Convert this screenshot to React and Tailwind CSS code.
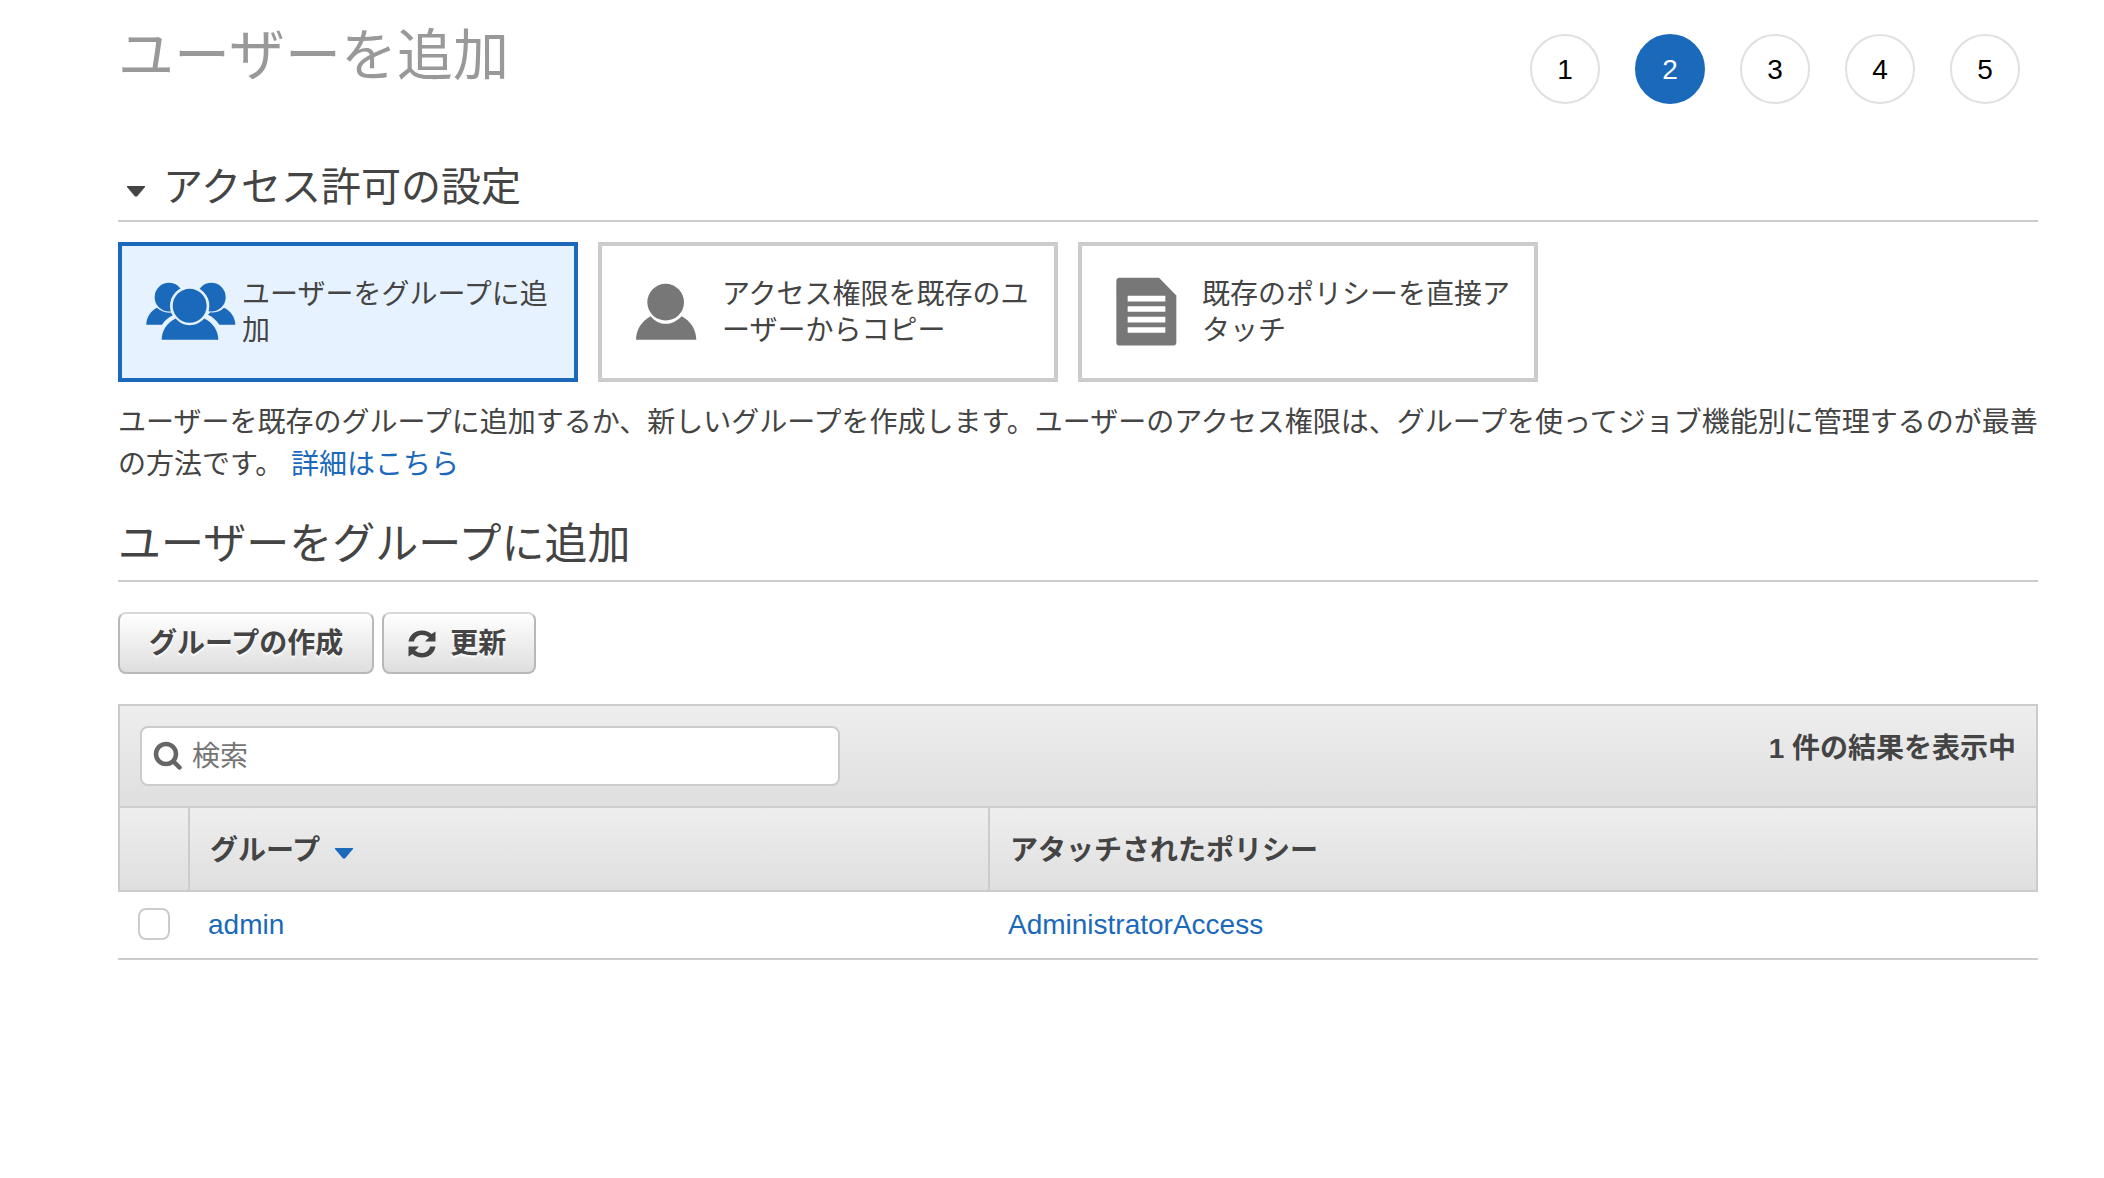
const steps = [1, 2, 3, 4, 5];
const currentStep = 2;

const groups = [{ name: 'admin', policy: 'AdministratorAccess' }];

function UsersIcon() {
  return (
    <svg viewBox="104 124 276 212" className="h-[71px] w-[92px] shrink-0 fill-[#1a69bb]" aria-hidden="true">
      <circle cx="176" cy="187" r="43" />
      <circle cx="303" cy="187" r="43" />
      <path d="M108 270c0-22 13-42 32-51 11 11 27 16 43 14l5 8c-14 6-25 16-33 29z" />
      <path d="M375 270c0-22-14-42-34-51-11 11-27 16-41 13l-7 8c14 6 26 17 34 30z" />
      <circle cx="238" cy="213" r="59" className="fill-[#e6f2ff]" />
      <circle cx="238" cy="213" r="51" />
      <path d="M154 315c0-27 16-52 42-64 11 13 26 20 42 20s32-7 44-20c26 12 42 37 42 64z" />
    </svg>
  );
}

function UserIcon() {
  return (
    <svg viewBox="104 124 276 212" className="h-[71px] w-[92px] shrink-0 fill-[#777]" aria-hidden="true">
      <circle cx="226" cy="202" r="55" />
      <path d="M137 315c0-30 17-57 44-71 12 15 28 23 45 23s34-8 48-23c27 14 44 41 44 71z" />
    </svg>
  );
}

function DocumentIcon() {
  return (
    <svg viewBox="104 124 276 212" className="h-[71px] w-[92px] shrink-0 fill-[#777]" aria-hidden="true">
      <path d="M148 129h118l52 53v140q0 10-10 10H148q-10 0-10-10V139q0-10 10-10z" />
      <path d="M172 183h113v17H172zM172 214h113v17H172zM172 246h113v17H172zM172 277h113v17H172z" className="fill-white" />
    </svg>
  );
}

function CaretIcon({ className }) {
  return (
    <svg viewBox="0 0 18 11" className={className} aria-hidden="true">
      <path d="M0 0h18v1l-8 9.500h-2L0 1z" />
    </svg>
  );
}

function RefreshIcon() {
  return (
    <svg viewBox="0 0 28 28" className="h-7 w-7 fill-[#444]" aria-hidden="true">
      <path d="M0.500 11.500C1.500 5 7 0.500 14 0.500c4 0 7 1.300 9.500 3.500L27.500 1.500v10H17l4-4c-2-1.700-4.500-2.500-7-2.500-4 0-7 2.500-8 6.500z" />
      <path d="M27.500 16.500c-1 6.500-6.500 11-13.500 11-4 0-7-1.300-9.500-3.500l-4 2.500v-10H11l-4 4c2 1.700 4.500 2.500 7 2.500 4 0 7-2.500 8-6.500z" />
    </svg>
  );
}

function SearchIcon() {
  return (
    <svg viewBox="0 0 30 30" className="h-[30px] w-[30px] shrink-0 fill-none stroke-[#666]" aria-hidden="true">
      <circle cx="13" cy="13" r="10" strokeWidth="4.500" />
      <path d="M20.500 20.500l6 6" strokeWidth="4.500" strokeLinecap="round" />
    </svg>
  );
}

const options = [
  { label: 'ユーザーをグループに追加', icon: UsersIcon, selected: true },
  { label: 'アクセス権限を既存のユーザーからコピー', icon: UserIcon },
  { label: '既存のポリシーを直接アタッチ', icon: DocumentIcon },
];

const buttonClass =
  'flex items-center rounded-lg border-2 border-[#b8b8b8] border-t-[#d9d9d9] bg-linear-to-b from-white to-[#dedede] pt-[9px] pb-[7px] font-bold leading-[42px] [text-shadow:0_2px_2px_white]';

export default function App() {
  return (
    <main
      lang="ja"
      className="min-h-screen bg-white pr-[66px] pl-[118px] font-['Liberation_Sans','Noto_Sans_CJK_JP',sans-serif] text-[28px] text-[#444]"
    >
      <header className="flex items-start justify-between">
        <h1 className="pt-6 text-[56px] leading-[64px] text-[#999]">ユーザーを追加</h1>
        <ol className="flex gap-[35px] pt-[34px] pr-[18px] text-black">
          {steps.map((step) => (
            <li
              key={step}
              aria-current={step === currentStep ? 'step' : undefined}
              className={`flex h-[70px] w-[70px] items-center justify-center rounded-full border-2 pt-0.5 ${
                step === currentStep ? 'border-[#1a69bb] bg-[#1a69bb] text-white' : 'border-[#e0e0e0]'
              }`}
            >
              {step}
            </li>
          ))}
        </ol>
      </header>

      <section>
        <h2 className="mt-[58px] border-b-2 border-[#ccc] pb-2 text-[40px] leading-[50px]">
          <button type="button" aria-expanded="true" className="flex items-center gap-[18px] pl-[9px]">
            <CaretIcon className="mt-2 h-[11px] w-[18px] fill-[#444]" />
            アクセス許可の設定
          </button>
        </h2>

        <div className="mt-5 flex gap-5">
          {options.map(({ label, icon: Icon, selected }) => (
            <button
              key={label}
              type="button"
              aria-pressed={Boolean(selected)}
              className={`flex w-[460px] items-start gap-[5px] border-4 pt-[30px] pr-2 pb-[29px] pl-[23px] text-left leading-9 ${
                selected ? 'border-[#1a69bb] bg-[#e6f2ff]' : 'border-[#ccc] bg-white'
              }`}
            >
              <Icon />
              <span className="pt-px">{label}</span>
            </button>
          ))}
        </div>

        <p className="mt-5 -mr-4 leading-[42px]">
          ユーザーを既存のグループに追加するか、新しいグループを作成します。ユーザーのアクセス権限は、グループを使ってジョブ機能別に管理するのが最善の方法です。{' '}
          <a href="#learn-more" className="text-[#1a69bb]">詳細はこちら</a>
        </p>
      </section>

      <section>
        <h2 className="mt-7 border-b-2 border-[#ccc] pb-1.5 text-[43px] leading-[60px]">ユーザーをグループに追加</h2>

        <div className="mt-[30px] flex gap-2">
          <button type="button" className={`${buttonClass} px-[29px]`}>グループの作成</button>
          <button type="button" className={`${buttonClass} gap-[14px] pr-7 pl-6`}>
            <RefreshIcon />
            更新
          </button>
        </div>

        <div className="mt-[30px] flex items-start justify-between border-2 border-b-0 border-[#ccc] bg-linear-to-b from-[#eee] to-[#dfdfdf] p-5">
          <label className="flex h-[60px] w-[700px] items-center gap-[9px] rounded-lg border-2 border-[#ccc] bg-white px-[11px]">
            <SearchIcon />
            <input
              type="search"
              aria-label="検索"
              placeholder="検索"
              className="min-w-0 flex-1 bg-transparent pt-0.5 outline-none placeholder:text-[#757575]"
            />
          </label>
          <p className="pt-0.5 leading-[42px] font-bold">1 件の結果を表示中</p>
        </div>

        <table className="w-full table-fixed border-separate border-spacing-0 text-left">
          <thead>
            <tr className="h-[86px] bg-linear-to-b from-[#eee] to-[#dfdfdf]">
              <th className="w-[72px] border-2 border-[#ccc]" aria-label="選択" />
              <th className="w-[800px] border-y-2 border-r-2 border-[#ccc] px-5 pt-1">
                <button type="button" className="flex items-center gap-[15px]">
                  グループ
                  <CaretIcon className="mt-1 h-[11px] w-[18px] fill-[#1a69bb]" />
                </button>
              </th>
              <th className="border-y-2 border-r-2 border-[#ccc] px-5 pt-1">アタッチされたポリシー</th>
            </tr>
          </thead>
          <tbody>
            {groups.map((group) => (
              <tr key={group.name} className="h-[68px]">
                <td className="border-b-2 border-[#ccc] pb-0.5 pl-5">
                  <input
                    type="checkbox"
                    aria-label={group.name}
                    className="block h-8 w-8 appearance-none rounded-lg border-2 border-[#ccc] bg-white checked:bg-[#1a69bb]"
                  />
                </td>
                <td className="border-b-2 border-[#ccc] px-[18px]">
                  <a href="#admin" className="text-[#1a69bb]">{group.name}</a>
                </td>
                <td className="border-b-2 border-[#ccc] px-[18px]">
                  <a href="#policy" className="text-[#1a69bb]">{group.policy}</a>
                </td>
              </tr>
            ))}
          </tbody>
        </table>
      </section>
    </main>
  );
}
